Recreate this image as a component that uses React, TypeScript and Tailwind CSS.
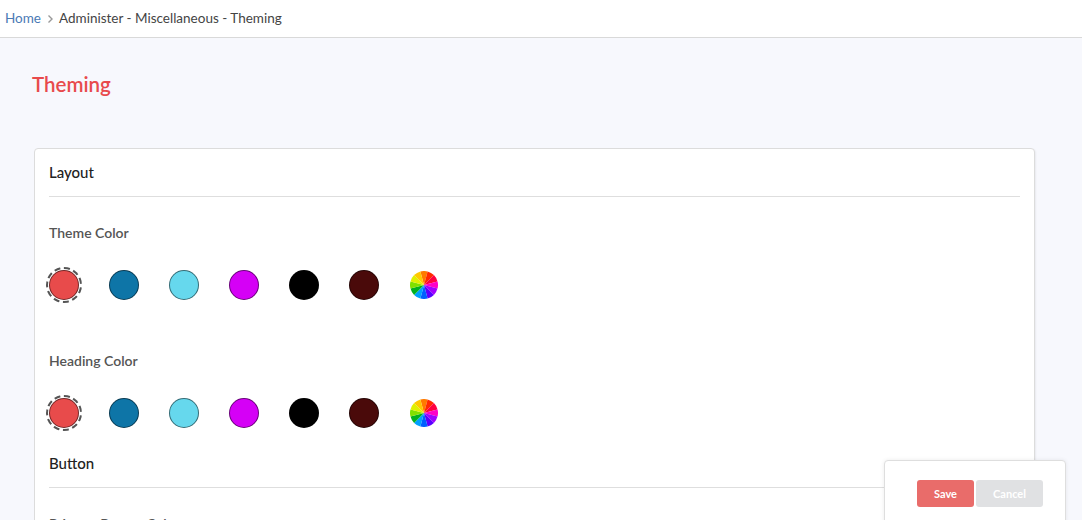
const swatches = ['#e84b4b', '#0e75a7', '#66d8ed', '#d500f6', '#000000', '#4a0a0a']

const wheelColors = [
  '#ff7a00', '#ff2a00', '#ff0040', '#ff00c8', '#a000ff', '#5a00ff',
  '#0060ff', '#00a0ff', '#00b020', '#80e000', '#e0f000', '#ffc800',
]

function ColorWheel() {
  const r = 14
  // 12 wedges, starting at the top and going clockwise
  const wedges = wheelColors.map((c, i) => {
    const a0 = ((i * 30 - 90 - 15) * Math.PI) / 180
    const a1 = ((i * 30 - 90 + 15) * Math.PI) / 180
    const x0 = r + r * Math.cos(a0)
    const y0 = r + r * Math.sin(a0)
    const x1 = r + r * Math.cos(a1)
    const y1 = r + r * Math.sin(a1)
    return <path key={i} d={`M${r} ${r} L${x0} ${y0} A${r} ${r} 0 0 1 ${x1} ${y1} Z`} fill={c} />
  })
  return (
    <svg width="28" height="28" viewBox="0 0 28 28" aria-hidden="true">
      {wedges}
    </svg>
  )
}

function SwatchRow() {
  return (
    <div className="-ml-[3px] flex items-center gap-6">
      {swatches.map((c, i) => (
        <div
          key={c}
          className={`flex h-9 w-9 items-center justify-center rounded-full ${
            i === 0 ? 'border-2 border-dashed border-[#555]' : ''
          }`}
        >
          <span
            className="block h-[30px] w-[30px] rounded-full border border-black/50"
            style={{ backgroundColor: c }}
          />
        </div>
      ))}
      <div className="flex h-9 w-9 items-center justify-center">
        <ColorWheel />
      </div>
    </div>
  )
}

function SectionTitle({ children }: { children: string }) {
  return (
    <div className="border-b border-[#dedede] pb-[14px] text-[15px] leading-5 font-medium text-[#222]">
      {children}
    </div>
  )
}

function FieldLabel({ children }: { children: string }) {
  return <div className="text-[14px] leading-5 font-semibold text-[#555]">{children}</div>
}

export default function App() {
  return (
    <div className="relative h-[520px] overflow-hidden bg-[#f7f8fd] font-['Lato','Noto_Sans',sans-serif]">
      {/* Breadcrumb bar */}
      <div className="flex h-[38px] items-center gap-[5px] border-b border-[#d9d9d9] bg-white pl-[5px] text-[13.5px]">
        <span className="text-[#4a7ab5]">Home</span>
        <svg width="8" height="10" viewBox="0 0 8 10" className="text-[#999]" aria-hidden="true">
          <path d="M2.5 1.5 L6 5 L2.5 8.5" fill="none" stroke="currentColor" strokeWidth="1.4" />
        </svg>
        <span className="text-[#444]">Administer - Miscellaneous - Theming</span>
      </div>

      <div className="pt-[32px] pl-[32px] pr-[47px]">
        <h1 className="text-[20.5px] leading-7 font-semibold text-[#e84a4c]">Theming</h1>

        <div className="mt-[50px] ml-[2px] rounded border border-[#dcdcdc] bg-white px-[14px] pt-[13px] pb-10 shadow-[1px_1px_2px_rgba(0,0,0,0.06)]">
          <SectionTitle>Layout</SectionTitle>
          <div className="mt-[26px]">
            <FieldLabel>Theme Color</FieldLabel>
          </div>
          <div className="mt-6">
            <SwatchRow />
          </div>
          <div className="mt-[48px]">
            <FieldLabel>Heading Color</FieldLabel>
          </div>
          <div className="mt-6">
            <SwatchRow />
          </div>
          <div className="mt-[22px]">
            <SectionTitle>Button</SectionTitle>
          </div>
          <div className="mt-[26px]">
            <FieldLabel>Primary Button Color</FieldLabel>
          </div>
        </div>
      </div>

      {/* Floating action panel */}
      <div className="absolute top-[460px] left-[884px] h-[80px] w-[182px] rounded border border-[#dedede] bg-white shadow-[0_0_4px_rgba(0,0,0,0.08)]">
        <div className="mt-[19px] ml-[32px] flex gap-[2px]">
          <button className="h-[27px] w-[57px] rounded-[3px] bg-[#e96c6a] pt-[2px] text-[11px] font-bold text-white">
            Save
          </button>
          <button className="h-[27px] w-[67px] rounded-[3px] bg-[#e0e1e3] pt-[2px] text-[11px] font-bold text-white">
            Cancel
          </button>
        </div>
      </div>
    </div>
  )
}
